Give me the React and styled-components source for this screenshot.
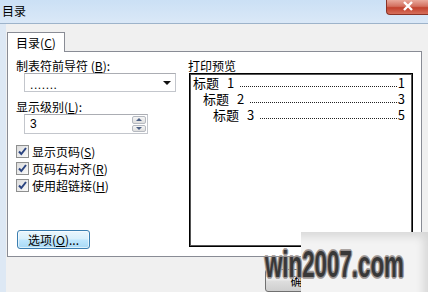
import React from "react";
import styled, { createGlobalStyle } from "styled-components";

const Global = createGlobalStyle`
  html, body {
    margin: 0;
    padding: 0;
    background: #f0f0f0;
  }
  body {
    font-family: "Noto Sans CJK SC", "Liberation Sans", sans-serif;
    font-size: 12px;
    color: #000;
  }
`;

// Window shell
const Window = styled.div`
  position: relative;
  width: 428px;
  height: 292px;
  overflow: hidden;
  background: #f0f0f0;
  display: flex;
  flex-direction: column;
`;

const TitleBar = styled.div`
  height: 23px;
  border-bottom: 1px solid #9db3ca;
  background: linear-gradient(to bottom, #cbe0f5, #dae8f7);
  display: flex;
  justify-content: space-between;
  align-items: flex-start;
  padding-left: 2px;
`;

const Title = styled.div`
  line-height: 21px;
  font-size: 12px;
`;

const CloseButton = styled.div`
  width: 42px;
  height: 15px;
  box-sizing: border-box;
  border: 1px solid #8a3326;
  border-top: none;
  border-right: none;
  border-radius: 0 0 0 4px;
  background: linear-gradient(to bottom, #e9a99b 0%, #d3705f 45%, #c2412d 55%, #d6705c 100%);
  display: flex;
  justify-content: center;
  align-items: flex-start;
  padding-top: 1px;
`;

const Client = styled.div`
  flex: 1;
  display: flex;
  flex-direction: column;
  border-left: 6px solid #dde8f4;
  padding: 8px 6px 0 1px;
`;

// Tabs
const TabStrip = styled.div`
  display: flex;
  position: relative;
  z-index: 1;
`;

const Tab = styled.div`
  width: 58px;
  height: 20px;
  box-sizing: border-box;
  border: 1px solid #898c95;
  border-bottom: none;
  background: #fff;
  line-height: 20px;
  text-align: center;
  margin-bottom: -1px;
`;

const Panel = styled.div`
  height: 206px;
  box-sizing: border-box;
  border: 1px solid #898c95;
  background: #fff;
  display: flex;
  padding: 6px 8px 7px 8px;
  gap: 8px;
`;

const LeftCol = styled.div`
  width: 164px;
  display: flex;
  flex-direction: column;
`;

const RightCol = styled.div`
  flex: 1;
  display: flex;
  flex-direction: column;
`;

const Label = styled.div`
  line-height: 15px;
  height: 15px;
  margin-top: ${(p) => p.$top || 0}px;
  white-space: nowrap;
`;

const Field = styled.div`
  margin-left: 8px;
  height: ${(p) => p.$h}px;
  width: ${(p) => p.$w}px;
  box-sizing: border-box;
  border: 1px solid #c3c6cc;
  border-top-color: #abadb3;
  background: #fff;
  display: flex;
  align-items: center;
  justify-content: space-between;
  padding-left: 5px;
  font-family: "Liberation Sans", sans-serif;
  font-size: 12px;
`;

const Dots = styled.span`
  letter-spacing: 0.6px;
  position: relative;
  top: 2px;
`;

const SelectArrow = styled.span`
  width: 0;
  height: 0;
  border-left: 4px solid transparent;
  border-right: 4px solid transparent;
  border-top: 4px solid #111;
  margin-right: 4px;
`;

const SpinButtons = styled.div`
  display: flex;
  flex-direction: column;
  gap: 1px;
  height: 100%;
  padding: 1px;
  box-sizing: border-box;
`;

const SpinBtn = styled.div`
  width: 14px;
  flex: 1;
  box-sizing: border-box;
  border: 1px solid #b5b9c0;
  border-radius: 2px;
  background: linear-gradient(to bottom, #f6f6f6, #dedede);
  display: flex;
  justify-content: center;
  align-items: center;
  &::after {
    content: "";
    border-left: 3px solid transparent;
    border-right: 3px solid transparent;
    ${(p) =>
      p.$up ? "border-bottom: 3px solid #4d6185;" : "border-top: 3px solid #4d6185;"}
  }
`;

const CheckList = styled.div`
  margin-top: 9px;
  display: flex;
  flex-direction: column;
`;

const CheckRow = styled.div`
  height: 17px;
  display: flex;
  align-items: center;
  gap: 3px;
`;

const CheckBox = styled.div`
  width: 13px;
  height: 13px;
  box-sizing: border-box;
  border: 1px solid #8e8f8f;
  background: linear-gradient(135deg, #dcdcdc, #fafafa);
  display: flex;
  align-items: center;
  justify-content: center;
`;

const OptionsButton = styled.div`
  margin-top: auto;
  margin-left: 1px;
  width: 73px;
  height: 19px;
  box-sizing: border-box;
  border: 1px solid #3c7fb1;
  border-radius: 3px;
  background: linear-gradient(to bottom, #eaf6fd 0%, #d9f0fc 45%, #bee6fd 55%, #a7d9f5 100%);
  box-shadow: inset 0 0 0 1px rgba(255, 255, 255, 0.6);
  line-height: 17px;
  text-align: center;
  white-space: nowrap;
`;

const Preview = styled.div`
  margin-left: 1px;
  height: 174px;
  box-sizing: border-box;
  border: 1px solid #000;
  box-shadow: inset 0 0 0 1px #555;
  padding: 1px 7px 0 3px;
  display: flex;
  flex-direction: column;
  font-size: 13px;
`;

const PreviewRow = styled.div`
  height: 16px;
  line-height: 16px;
  display: flex;
  padding-left: ${(p) => p.$level * 10}px;
`;

const LevelNum = styled.span`
  margin-left: 8px;
`;

const Leader = styled.span`
  flex: 1;
  align-self: flex-end;
  margin: 0 1px 4px 6px;
  border-bottom: 1px dotted #222;
`;

const Footer = styled.div`
  flex: 1;
  display: flex;
  justify-content: flex-end;
  gap: 7px;
  padding-top: 12px;
`;

const FooterButton = styled.div`
  width: 75px;
  height: 23px;
  box-sizing: border-box;
  border: 1px solid #707070;
  border-radius: 3px;
  background: linear-gradient(to bottom, #f2f2f2 0%, #ebebeb 45%, #dddddd 55%, #cfcfcf 100%);
  line-height: 21px;
  text-align: center;
`;

// Watermark on top of the dialog corner
const WatermarkBox = styled.div`
  position: absolute;
  right: 0;
  bottom: 0;
  width: 127px;
  height: 60px;
  background: #f3f3f3;
  box-shadow: inset -8px 8px 10px -4px rgba(0, 0, 0, 0.12);
`;

const WatermarkText = styled.div`
  position: absolute;
  left: 265px;
  top: 247px;
  font-family: "Liberation Sans", sans-serif;
  font-weight: bold;
  font-size: 36px;
  line-height: 36px;
  color: #383838;
  white-space: nowrap;
  transform: scaleX(0.62);
  transform-origin: left top;
  text-shadow: 1px 1px 0 #9a9492, -1px -1px 0 #9a9492, 1px -1px 0 #9a9492, -1px 1px 0 #9a9492,
    2px 0 0 #aaa4a2, -2px 0 0 #aaa4a2, 0 2px 0 #aaa4a2, 0 -2px 0 #aaa4a2;
`;

const checks = [
  ["显示页码", "S"],
  ["页码右对齐", "R"],
  ["使用超链接", "H"],
];

const entries = [
  { level: 0, page: 1 },
  { level: 1, page: 3 },
  { level: 2, page: 5 },
];

function CheckMark() {
  return (
    <svg width="11" height="11" viewBox="0 0 11 11">
      <path d="M2 5.5 L4.3 8 L9 2" fill="none" stroke="#2b4480" strokeWidth="2" />
    </svg>
  );
}

export default function App() {
  return (
    <>
      <Global />
      <Window>
        <TitleBar>
          <Title>目录</Title>
          <CloseButton>
            <svg width="12" height="10" viewBox="0 0 12 10">
              <path d="M2 1 L10 9 M10 1 L2 9" stroke="#fff" strokeWidth="2.4" />
            </svg>
          </CloseButton>
        </TitleBar>
        <Client>
          <TabStrip>
            <Tab>
              目录(<u>C</u>)
            </Tab>
          </TabStrip>
          <Panel>
            <LeftCol>
              <Label>
                制表符前导符 (<u>B</u>):
              </Label>
              <Field $w={152} $h={19}>
                <Dots>.......</Dots>
                <SelectArrow />
              </Field>
              <Label $top={7}>
                显示级别(<u>L</u>):
              </Label>
              <Field $w={124} $h={20}>
                <span>3</span>
                <SpinButtons>
                  <SpinBtn $up />
                  <SpinBtn />
                </SpinButtons>
              </Field>
              <CheckList>
                {checks.map(([text, key]) => (
                  <CheckRow key={key}>
                    <CheckBox>
                      <CheckMark />
                    </CheckBox>
                    <span>
                      {text}(<u>{key}</u>)
                    </span>
                  </CheckRow>
                ))}
              </CheckList>
              <OptionsButton>
                选项(<u>O</u>)...
              </OptionsButton>
            </LeftCol>
            <RightCol>
              <Label>打印预览</Label>
              <Preview>
                {entries.map((e) => (
                  <PreviewRow key={e.page} $level={e.level}>
                    <span>标题</span>
                    <LevelNum>{e.level + 1}</LevelNum>
                    <Leader />
                    <span>{e.page}</span>
                  </PreviewRow>
                ))}
              </Preview>
            </RightCol>
          </Panel>
          <Footer>
            <FooterButton>确定</FooterButton>
            <FooterButton>取消</FooterButton>
          </Footer>
        </Client>
        <WatermarkBox />
        <WatermarkText>win2007.com</WatermarkText>
      </Window>
    </>
  );
}
